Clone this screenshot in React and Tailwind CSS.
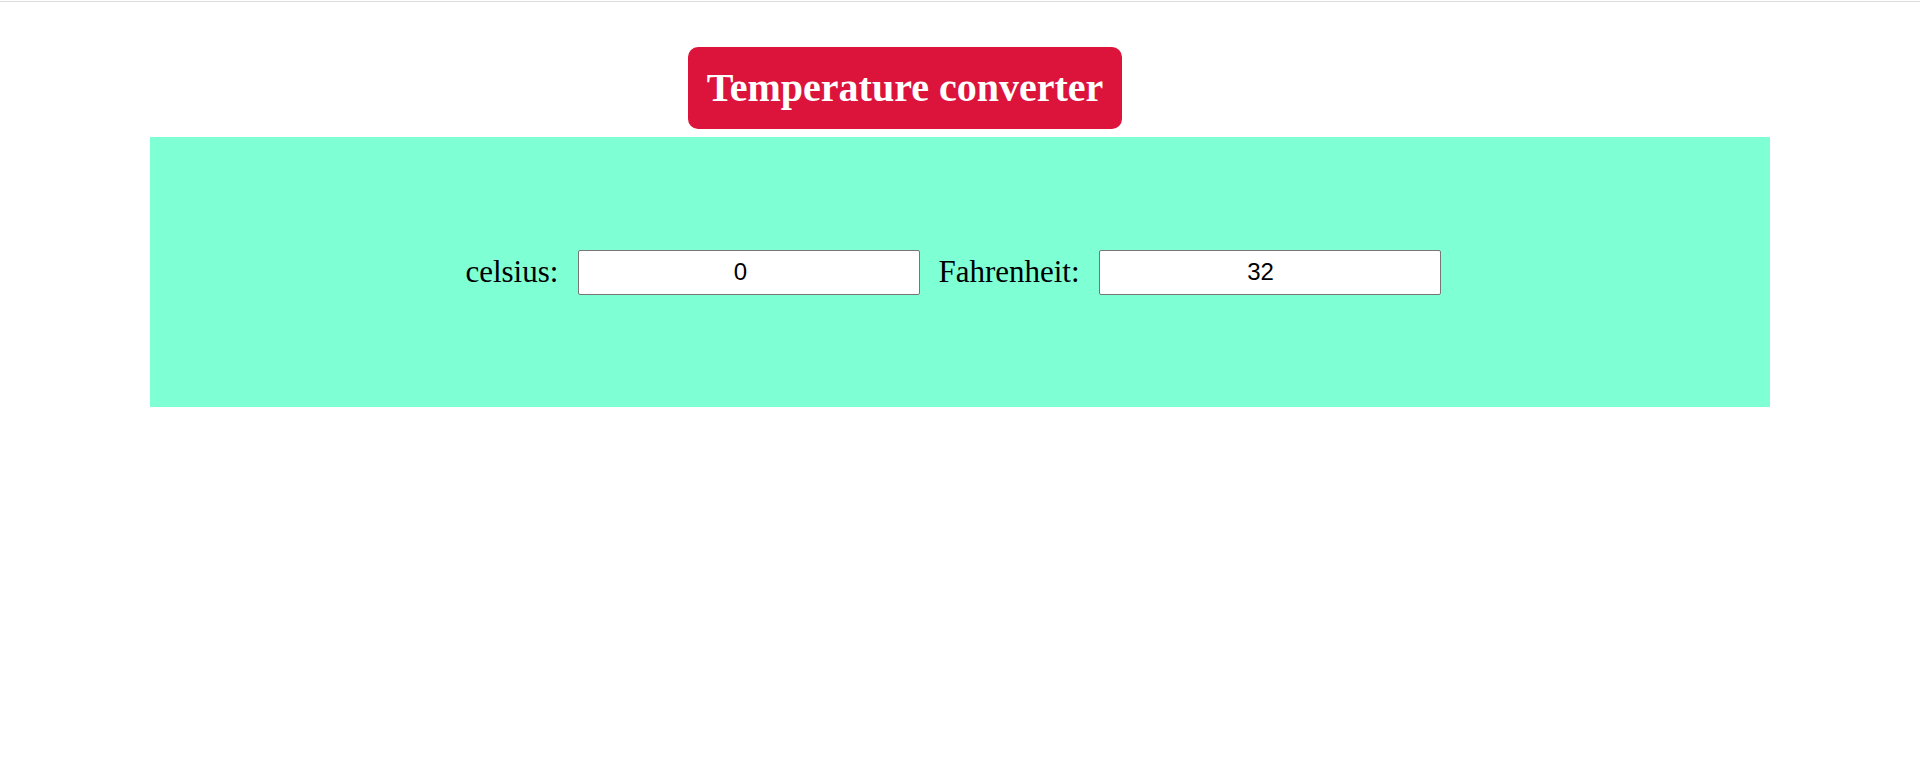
import { useState } from 'react'

export default function App() {
  const [celsius, setCelsius] = useState('0')
  const [fahrenheit, setFahrenheit] = useState('32')

  function onCelsius(e) {
    const v = e.target.value
    setCelsius(v)
    const n = parseFloat(v)
    setFahrenheit(isNaN(n) ? '' : String(Math.round((n * 9 / 5 + 32) * 100) / 100))
  }

  function onFahrenheit(e) {
    const v = e.target.value
    setFahrenheit(v)
    const n = parseFloat(v)
    setCelsius(isNaN(n) ? '' : String(Math.round(((n - 32) * 5 / 9) * 100) / 100))
  }

  return (
    <div className="min-h-screen bg-white font-['Liberation_Serif','Times_New_Roman',serif]">
      <div className="mt-px h-px bg-[#dcdcdc]" />

      <div className="ml-[688px] mt-[45px] flex h-[82px] w-[434px] items-center justify-center rounded-[10px] bg-[#dc143c]">
        <h1 className="text-[40px] font-bold leading-none text-white">Temperature converter</h1>
      </div>

      <div className="mx-[150px] mt-[8px] flex h-[270px] items-center justify-center bg-[#7fffd4] pr-[14px]">
        <label className="text-[31px] text-black">celsius:</label>
        <input
          value={celsius}
          onChange={onCelsius}
          className="ml-[20px] h-[45px] w-[342px] rounded-[2px] border border-[#767676] bg-white pl-[2px] pr-[20px] text-center font-['Liberation_Sans',Arial,sans-serif] text-[24px] text-black outline-none"
        />
        <label className="ml-[18px] text-[31px] text-black">Fahrenheit:</label>
        <input
          value={fahrenheit}
          onChange={onFahrenheit}
          className="ml-[19px] h-[45px] w-[342px] rounded-[2px] border border-[#767676] bg-white pl-[2px] pr-[20px] text-center font-['Liberation_Sans',Arial,sans-serif] text-[24px] text-black outline-none"
        />
      </div>
    </div>
  )
}
